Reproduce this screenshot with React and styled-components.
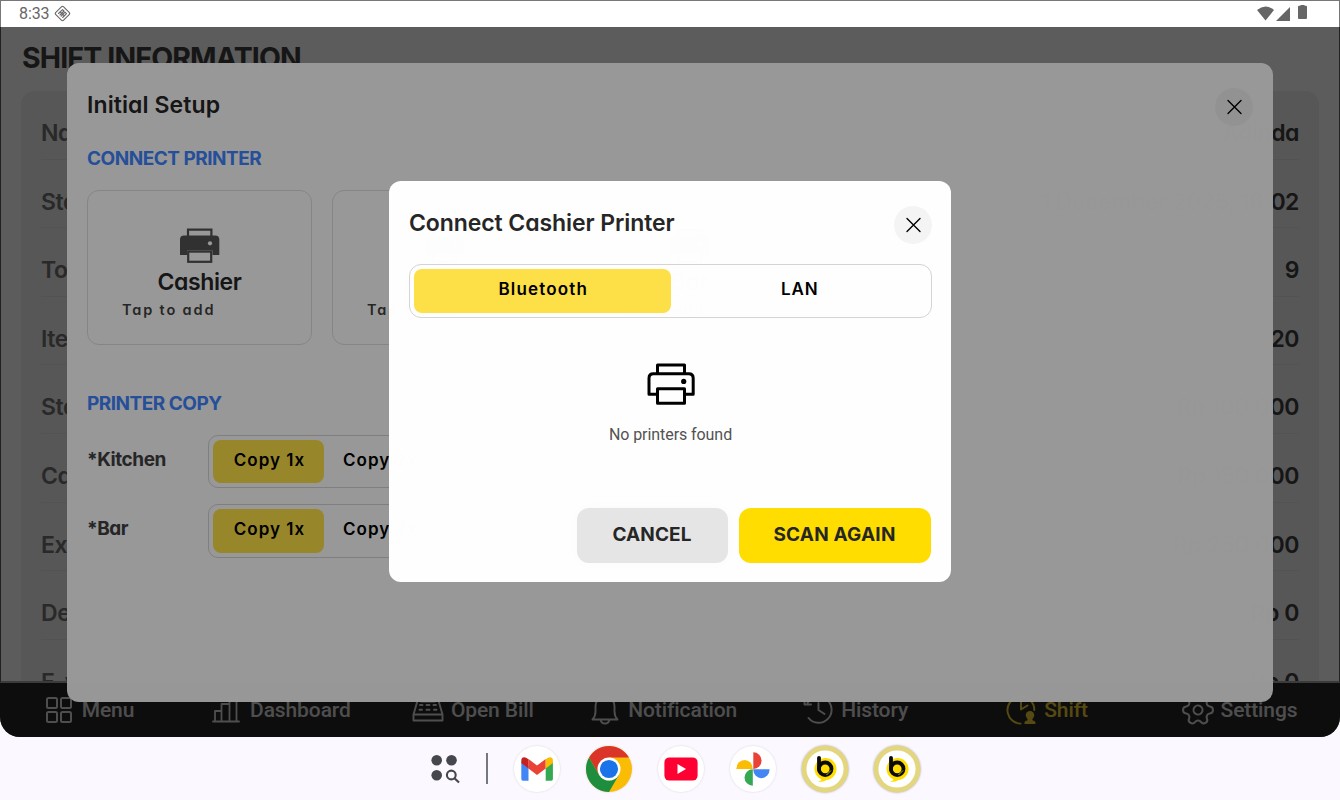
import React from "react";
import styled, { createGlobalStyle } from "styled-components";
import { Settings } from "lucide-react";

const GlobalStyle = createGlobalStyle`
  *, *::before, *::after { box-sizing: border-box; }
  body {
    margin: 0;
    background: #fbf8ff;
    font-family: Inter, "Open Sans", sans-serif;
    font-feature-settings: "cv11";
  }
  button { font: inherit; font-feature-settings: inherit; border: 0; padding: 0; }
`;

/* ---------- device frame ---------- */

const Device = styled.div`
  position: relative;
  display: flex;
  flex-direction: column;
  width: 1340px;
  height: 800px;
  overflow: hidden;
`;

const Screen = styled.div`
  position: relative;
  display: flex;
  flex-direction: column;
  height: 737px;
  overflow: hidden;
  border-radius: 0 0 20px 20px;
  background: #fff;
`;

const StatusBar = styled.header`
  position: relative;
  z-index: 5;
  display: flex;
  align-items: center;
  justify-content: space-between;
  height: 27px;
  flex: none;
  padding: 0 32px 1px 18px;
  background: #fff;
  border: solid #777;
  border-width: 1px 1px 0;
`;

const StatusGroup = styled.div`
  display: flex;
  align-items: center;
  gap: ${(p) => p.$gap}px;
  color: #666;
`;

const Clock = styled.span`
  font: 400 16px/26px Roboto, sans-serif;
  letter-spacing: -0.1px;
`;

const BatterySlot = styled.span`
  display: flex;
  margin: 0 0 3px 6px;
`;

/* ---------- shift page ---------- */

const Page = styled.main`
  flex: 1;
  min-height: 0;
  overflow: hidden;
  padding: 11px 20px 0;
  border: solid #5c5c5c;
  border-width: 0 1px;
  border-bottom: 2px solid #a5a5a5;
`;

const PageTitle = styled.h1`
  margin: 0 0 13px 1px;
  font-size: 28.5px;
  line-height: 40px;
  font-weight: 700;
  letter-spacing: -0.86px;
  color: #404040;
`;

const InfoCard = styled.section`
  padding: 0 20px 0 20px;
  height: 640px;
  border-radius: 14px;
  background: #f2f2f2;
`;

const InfoRow = styled.div`
  display: flex;
  justify-content: space-between;
  height: 68.6px;
  padding-top: 27px;
  border-bottom: 1px solid #e6e6e6;
  font-size: 23px;
  line-height: 30px;
  font-weight: 600;
  letter-spacing: -0.45px;
  color: #404040;
`;

const InfoLabel = styled.span`
  color: #737373;
`;

const NavBar = styled.nav`
  display: flex;
  flex: none;
  height: 54px;
  background: #272727;
`;

const NavItem = styled.div`
  flex: 1;
  display: flex;
  align-items: center;
  justify-content: center;
  gap: ${(p) => p.$gap}px;
  margin-right: 11.5px;
  color: ${(p) => (p.$active ? "#f0cf35" : "#dadada")};
  font: 500 21px/54px Roboto, sans-serif;
  letter-spacing: -0.1px;
  white-space: nowrap;

  svg { flex: none; }
`;

/* ---------- modals ---------- */

const Backdrop = styled.div`
  position: absolute;
  inset: ${(p) => p.$top}px 0 0;
  background: rgba(0, 0, 0, 0.4);
`;

const SetupDialog = styled.section`
  position: absolute;
  left: 67px;
  top: 63px;
  width: 1206px;
  height: 639px;
  padding: 25px 20px;
  border-radius: 12px;
  background: rgba(255, 255, 255, 0.988);
`;

const ConnectDialog = styled.section`
  position: absolute;
  left: 389px;
  top: 181px;
  width: 562px;
  height: 401px;
  padding: 25px 19px 19px 20px;
  display: flex;
  flex-direction: column;
  border-radius: 12px;
  background: rgba(255, 255, 255, 0.994);
`;

const DialogHeader = styled.div`
  display: flex;
  justify-content: space-between;
  height: 38px;
`;

const DialogTitle = styled.h2`
  margin: 0;
  font-size: 23px;
  line-height: 35px;
  font-weight: 600;
  letter-spacing: ${(p) => p.$ls || 0}px;
  color: #262626;
`;

const CloseButton = styled.button`
  display: grid;
  place-items: center;
  width: 38px;
  height: 38px;
  border-radius: 50%;
  background: #f4f4f4;
`;

const SectionTitle = styled.h3`
  margin: ${(p) => p.$top}px 0 0;
  font-size: 19px;
  line-height: 24px;
  font-weight: 700;
  letter-spacing: -0.5px;
  color: #3e84ff;
`;

const PrinterCards = styled.div`
  display: flex;
  gap: 20px;
  margin-top: 19px;
`;

const PrinterCard = styled.div`
  display: flex;
  flex-direction: column;
  align-items: center;
  width: 225px;
  height: 155px;
  padding-top: 37px;
  border: 1px solid #dedede;
  border-radius: 12px;
`;

const PrinterName = styled.div`
  margin-top: 4px;
  font-size: 23px;
  line-height: 30px;
  font-weight: 600;
  letter-spacing: -0.4px;
  color: #262626;
`;

const PrinterHint = styled.div`
  align-self: flex-start;
  margin-left: 34px;
  margin-top: 2px;
  font-size: 14.5px;
  line-height: 22px;
  font-weight: 600;
  letter-spacing: 1.85px;
  color: #404040;
`;

const CopyRow = styled.div`
  display: flex;
  height: ${(p) => p.$h}px;
  margin-top: ${(p) => p.$top}px;
`;

const CopyLabel = styled.div`
  width: 121px;
  font-size: 19px;
  line-height: 49px;
  font-weight: 700;
  letter-spacing: -0.45px;
  color: #404040;
`;

const Segmented = styled.div`
  display: flex;
  height: 100%;
  width: ${(p) => p.$w};
  padding: 4px;
  border: 1px solid #d4d4d4;
  border-radius: ${(p) => p.$r}px;
`;

const Segment = styled.button`
  flex: ${(p) => (p.$w ? `0 0 ${p.$w}px` : 1)};
  padding: 0 0 4px 2px;
  border-radius: 8px;
  background: ${(p) => (p.$active ? "#fddf47" : "transparent")};
  color: #000;
  font-size: 17px;
  font-weight: 600;
  letter-spacing: ${(p) => p.$ls}px;
`;

const TypeSwitch = styled.div`
  height: 54px;
  margin-top: 20px;
`;

const EmptyState = styled.div`
  display: flex;
  flex-direction: column;
  align-items: center;
  flex: 1;
  padding-top: 45px;
  color: #525252;
  font: 400 16px/24px Roboto, sans-serif;
  letter-spacing: -0.07px;

  svg { margin-bottom: 18px; }
`;

const Actions = styled.div`
  display: flex;
  justify-content: flex-end;
  gap: 11px;
  padding-right: 1px;
`;

const ActionButton = styled.button`
  width: ${(p) => p.$w}px;
  height: 55px;
  padding: 0 1px 2px 0;
  border-radius: 12px;
  background: ${(p) => (p.$primary ? "#ffdd00" : "#e5e5e5")};
  box-shadow: ${(p) => (p.$primary ? "none" : "0 0 14px rgba(0, 0, 0, 0.02)")};
  color: #262626;
  font-size: 19px;
  font-weight: 700;
  letter-spacing: ${(p) => (p.$primary ? 0.2 : 0.1)}px;
`;

/* ---------- taskbar ---------- */

const Taskbar = styled.footer`
  display: flex;
  align-items: center;
  height: 63px;
  padding-left: 431px;
  background: #fbf8ff;
`;

const Divider = styled.div`
  width: 2px;
  height: 31px;
  margin: 0 25px 1px 26px;
  background: #777781;
`;

const AppRow = styled.div`
  display: flex;
  gap: 24px;
`;

const AppIcon = styled.div`
  display: grid;
  place-items: center;
  width: 48px;
  height: 48px;

  svg { filter: drop-shadow(0 0 1px rgba(60, 60, 90, ${(p) => p.$shadow || 0.18})); }
`;

/* ---------- drawings ---------- */

const Line = ({ w, h, sw = 2, children }) => (
  <svg width={w} height={h} viewBox={`0 0 ${w} ${h}`} fill="none" stroke="currentColor" strokeWidth={sw} strokeLinejoin="round" strokeLinecap="round">
    {children}
  </svg>
);

const Cross = () => (
  <Line w={16} h={16} sw={1.4}>
    <g stroke="#000"><path d="M2 1.5 15 14.5M15 1.5 2 14.5" /></g>
  </Line>
);

const PrinterSolid = () => (
  <svg width="40" height="35" viewBox="0 0 40 35">
    <path d="M8 8.5V1.6H31.4V8.5" fill="none" stroke="#525252" strokeWidth="2.2" />
    <path d="M4 7.5H35.3Q39.3 7.5 39.3 11.5V27H32.5V22.5H7V27H0V11.5Q0 7.5 4 7.5Z" fill="#525252" />
    <rect x="8.2" y="23.6" width="23" height="10.2" fill="none" stroke="#525252" strokeWidth="2.2" />
    <circle cx="30" cy="15.3" r="2.1" fill="#fff" />
  </svg>
);

const PrinterOutline = () => (
  <svg width="48" height="42" viewBox="0 0 48 42" fill="none" stroke="#000" strokeWidth="3" strokeLinejoin="round">
    <path d="M10.5 10.5V2H37.5V10.5" />
    <path d="M10.5 31.3H2V15.2Q2 10.8 6.4 10.8H41.6Q46.2 10.8 46.2 15.2V31.3H37.5" />
    <rect x="10.5" y="25.8" width="27" height="14.4" />
    <circle cx="36.7" cy="18.4" r="2.6" fill="#000" stroke="none" />
  </svg>
);

const MenuIcon = () => (
  <Line w={26} h={26}>
    <rect x="1" y="1" width="10" height="10" rx="1.5" />
    <rect x="15" y="1" width="10" height="10" rx="1.5" />
    <rect x="1" y="15" width="10" height="10" rx="1.5" />
    <rect x="15" y="15" width="10" height="10" rx="1.5" />
  </Line>
);

const DashboardIcon = () => (
  <Line w={28} h={28} sw={1.8}>
    <path d="M1 25.5H27M3 25.5V15H9.5V25.5M9.5 25.5V8H17.5V25.5M17.5 25.5V2H24.5V25.5" />
  </Line>
);

const BillIcon = () => (
  <Line w={32} h={28} sw={1.9}>
    <path d="M1.5 18.5 6 3H26L30.5 18.5V24.5H1.5ZM1.5 18.5H30.5" />
    <path d="M8 9H10.5M14.5 9H17.5M21.5 9H24M7.5 13.7H10M14.5 13.7H17.5M22 13.7H24.5M9 5.5H23" />
  </Line>
);

const BellIcon = () => (
  <Line w={28} h={30} sw={1.9}>
    <path d="M1.5 24.5Q4.5 21.5 4.5 16.5V11Q5 2.5 14 2.5T23.5 11V16.5Q23.5 21.5 26.5 24.5ZM9.5 25Q10.5 28.5 14 28.5T18.5 25" />
  </Line>
);

const HistoryIcon = () => (
  <Line w={30} h={28} sw={1.9}>
    <path d="M5.5 22A13 13 0 1 0 4.5 7M1.5 3V8.5H8M15.5 7V14L21.5 18" />
  </Line>
);

const ShiftIcon = () => (
  <Line w={30} h={30} sw={1.9}>
    <path d="M14.5 28.6A13.5 13.5 0 0 1 9 3M13 1.5A13.5 13.5 0 0 1 28.3 15M15 5.5V14.5L21.5 10.5" />
    <circle cx="24" cy="20.3" r="4.2" fill="currentColor" stroke="none" />
    <path d="M18.5 29V27.2Q19 25.6 21.3 25.4L22 23H26L26.7 25.4Q29 25.6 29.4 27.2V29Z" fill="currentColor" stroke="none" />
  </Line>
);

const TurnedGear = styled(Settings)`
  transform: rotate(30deg);
`;

const GearIcon = () => <TurnedGear size={36} strokeWidth={1.35} />;

const LocationDiamond = () => (
  <Line w={17} h={17} sw={1.1}>
    <rect x="3" y="3" width="11" height="11" rx="1.6" transform="rotate(45 8.5 8.5)" />
    <path d="M4.5 8.5 8.5 4.6 10 6 6 10M7.2 11.2 11 7.2 12.5 8.7 8.7 12.5M6.2 6.8 10.4 10.9" />
  </Line>
);

const Wifi = () => (
  <svg width="17" height="15" viewBox="0 0 17 15"><path d="M0 4Q8.5-3 17 4L8.5 14.5Z" fill="#666" /></svg>
);
const Signal = () => (
  <svg width="14" height="14" viewBox="0 0 14 14"><path d="M14 0V14H0Z" fill="#666" /></svg>
);
const Battery = () => (
  <svg width="9" height="14" viewBox="0 0 9 14"><path d="M2.5 0H6.5V.7H8Q9 .7 9 1.7V13Q9 14 8 14H1Q0 14 0 13V1.7Q0 .7 1 .7H2.5Z" fill="#666" /></svg>
);

const AllApps = () => (
  <svg width="29" height="30" viewBox="0 0 29 30" fill="#46464f">
    <circle cx="5.7" cy="6.3" r="5.3" />
    <circle cx="20.5" cy="6.3" r="5.3" />
    <circle cx="5.7" cy="21.2" r="5.3" />
    <g fill="none" stroke="#46464f" strokeWidth="2.1"><circle cx="20.3" cy="21" r="4.4" /><path d="M23.5 24.2 28 28.6" /></g>
  </svg>
);

const Gmail = () => (
  <svg width="46" height="46" viewBox="0 0 46 46">
    <circle cx="23" cy="23" r="23" fill="#fff" />
    <path d="M7.3 16V33Q7.3 34.7 9 34.7H14.5V20Z" fill="#4285f4" />
    <path d="M38.9 16V33Q38.9 34.7 37.2 34.7H31.7V20Z" fill="#34a853" />
    <path d="M14.5 13V22.5L23 29 31.7 22.5V13L23 19.5Z" fill="#ea4335" />
    <path d="M14.5 22.5 7.3 17V14.5Q7.3 11.2 10.3 11.2 11.8 11.2 14.5 13.3Z" fill="#c5221f" />
    <path d="M31.7 22.5 38.9 17V14.5Q38.9 11.2 35.9 11.2 34.4 11.2 31.7 13.3Z" fill="#fbbc04" />
  </svg>
);

const Chrome = () => (
  <svg width="46" height="46" viewBox="0 0 46 46">
    <circle cx="23" cy="23" r="23" fill="#fbbc05" />
    <path d="M3.1 11.5A23 23 0 0 1 42.9 11.5H23L13 28.8Z" fill="#db3529" />
    <path d="M3.1 11.5A23 23 0 0 0 23 46L33 28.8 23 34.5 13 28.8Z" fill="#1e8e3e" />
    <circle cx="23" cy="23" r="11.5" fill="#fff" />
    <circle cx="23" cy="23" r="9.1" fill="#1a73e8" />
  </svg>
);

const YouTube = () => (
  <svg width="46" height="46" viewBox="0 0 46 46">
    <circle cx="23" cy="23" r="23" fill="#fff" />
    <rect x="6.4" y="11.4" width="33.2" height="23.2" rx="5" fill="#ff0033" />
    <path d="M19.5 18V28L28 23Z" fill="#fff" />
  </svg>
);

const Photos = () => (
  <svg width="46" height="46" viewBox="0 0 46 46">
    <circle cx="23" cy="23" r="23" fill="#fff" />
    <path d="M23.3 6.3A8.3 8.3 0 0 1 23.3 22.9Z" fill="#ea4335" />
    <path d="M39.6 23.3A8.2 8.9 0 0 1 23.2 23.3Z" fill="#4285f4" />
    <path d="M22.8 39.8A8.3 8.3 0 0 1 22.8 23.2Z" fill="#34a853" />
    <path d="M6.3 22.9A8.2 8.9 0 0 1 22.8 22.9Z" fill="#fbbc04" />
  </svg>
);

const BrandLogo = () => (
  <svg width="48" height="48" viewBox="0 0 48 48">
    <circle cx="24" cy="24" r="23.5" fill="#e3d67f" />
    <circle cx="24" cy="24" r="18.6" fill="#fff" />
    <circle cx="24.5" cy="24" r="11" fill="#ffdd00" />
    <path d="M18 31.5 20.5 35 17 37Q23 37 26.5 34.5Z" fill="#ffdd00" />
    <g fill="none" stroke="#0a0a0a" strokeWidth="3.8" strokeLinecap="round">
      <circle cx="24.2" cy="23.8" r="6.3" />
      <path d="M18 12.8V24.5" />
    </g>
    <path d="M25.5 30 30 25.5" stroke="#ffdd00" strokeWidth="0.8" />
  </svg>
);

/* ---------- data ---------- */

const infoRows = [
  ["Name", "Adinda"],
  ["Start Time", "1 December 2025, 16:02"],
  ["Total Bill", "9"],
  ["Items Sold", "20"],
  ["Starting Cash", "Rp 100.000"],
  ["Cash Sales", "Rp 150.000"],
  ["Expected Cash", "Rp 250.000"],
  ["Debit Card", "Rp 0"],
  ["E-wallet", "Rp 0"],
];

const navItems = [
  ["Menu", MenuIcon, 10],
  ["Dashboard", DashboardIcon, 10],
  ["Open Bill", BillIcon, 7],
  ["Notification", BellIcon, 9],
  ["History", HistoryIcon, 8],
  ["Shift", ShiftIcon, 8],
  ["Settings", GearIcon, 5],
];

const apps = [Gmail, Chrome, YouTube, Photos, BrandLogo, BrandLogo];

export default function App() {
  return (
    <Device>
      <GlobalStyle />
      <Screen>
        <StatusBar>
          <StatusGroup $gap={5}>
            <Clock>8:33</Clock>
            <LocationDiamond />
          </StatusGroup>
          <StatusGroup $gap={2}>
            <Wifi />
            <Signal />
            <BatterySlot><Battery /></BatterySlot>
          </StatusGroup>
        </StatusBar>

        <Page>
          <PageTitle>SHIFT INFORMATION</PageTitle>
          <InfoCard>
            {infoRows.map(([label, value]) => (
              <InfoRow key={label}>
                <InfoLabel>{label}</InfoLabel>
                <span>{value}</span>
              </InfoRow>
            ))}
          </InfoCard>
        </Page>

        <NavBar>
          {navItems.map(([label, Icon, gap]) => (
            <NavItem key={label} $gap={gap} $active={label === "Shift"}>
              <Icon />
              {label}
            </NavItem>
          ))}
        </NavBar>

        <Backdrop $top={27} />
        <SetupDialog>
          <DialogHeader>
            <DialogTitle $ls={0.1}>Initial Setup</DialogTitle>
            <CloseButton aria-label="Close"><Cross /></CloseButton>
          </DialogHeader>
          <SectionTitle $top={21}>CONNECT PRINTER</SectionTitle>
          <PrinterCards>
            {["Cashier", "Kitchen", "Bar"].map((name) => (
              <PrinterCard key={name}>
                <PrinterSolid />
                <PrinterName>{name}</PrinterName>
                <PrinterHint>Tap to add</PrinterHint>
              </PrinterCard>
            ))}
          </PrinterCards>
          <SectionTitle $top={47}>PRINTER COPY</SectionTitle>
          <CopyRow $h={53} $top={19}>
            <CopyLabel>*Kitchen</CopyLabel>
            <Segmented $w="234px" $r={10}>
              <Segment $active $w={111} $ls={1.05}>Copy 1x</Segment>
              <Segment $w={111} $ls={1.05}>Copy 2x</Segment>
            </Segmented>
          </CopyRow>
          <CopyRow $h={54} $top={16}>
            <CopyLabel>*Bar</CopyLabel>
            <Segmented $w="234px" $r={10}>
              <Segment $active $w={111} $ls={1.05}>Copy 1x</Segment>
              <Segment $w={111} $ls={1.05}>Copy 2x</Segment>
            </Segmented>
          </CopyRow>
        </SetupDialog>

        <Backdrop $top={27} />
        <ConnectDialog>
          <DialogHeader>
            <DialogTitle $ls={-0.08}>Connect Cashier Printer</DialogTitle>
            <CloseButton aria-label="Close"><Cross /></CloseButton>
          </DialogHeader>
          <TypeSwitch>
            <Segmented $w="100%" $r={12}>
              <Segment $active $ls={1.15}>Bluetooth</Segment>
              <Segment $ls={0.9}>LAN</Segment>
            </Segmented>
          </TypeSwitch>
          <EmptyState>
            <PrinterOutline />
            No printers found
          </EmptyState>
          <Actions>
            <ActionButton $w={151}>CANCEL</ActionButton>
            <ActionButton $w={192} $primary>SCAN AGAIN</ActionButton>
          </Actions>
        </ConnectDialog>
      </Screen>

      <Taskbar>
        <AllApps />
        <Divider />
        <AppRow>
          {apps.map((Icon, i) => (
            <AppIcon key={i} $shadow={i > 3 ? 0.4 : 0.18}><Icon /></AppIcon>
          ))}
        </AppRow>
      </Taskbar>
    </Device>
  );
}
